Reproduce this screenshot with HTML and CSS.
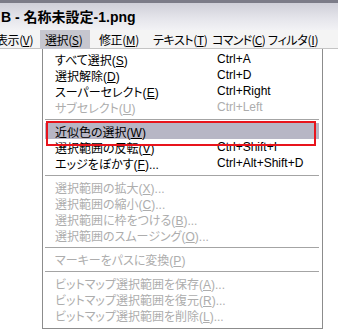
FILE: index.html
```html
<!DOCTYPE html>
<html lang="ja">
<head>
<meta charset="utf-8">
<link rel="stylesheet" href="styles.css">
</head>
<body>
<div class="window">
  <div class="titlebar"><span class="title">B - 名称未設定-1.png</span></div>
  <div class="menubar">
    <span class="mitem m-view">表示(<u>V</u>)</span>
    <span class="mitem m-select active">選択(<u>S</u>)</span>
    <span class="mitem m-modify">修正(<u>M</u>)</span>
    <span class="mitem m-text">テキスト(<u>T</u>)</span>
    <span class="mitem m-command">コマンド(<u>C</u>)</span>
    <span class="mitem m-filter">フィルタ(<u>I</u>)</span>
  </div>
  <div class="canvas"></div>
  <div class="dropdown">
    <div class="row"><span class="label">すべて選択(<u>S</u>)</span><span class="key">Ctrl+A</span></div>
    <div class="row"><span class="label">選択解除(<u>D</u>)</span><span class="key">Ctrl+D</span></div>
    <div class="row"><span class="label">スーパーセレクト(<u>E</u>)</span><span class="key">Ctrl+Right</span></div>
    <div class="row disabled"><span class="label">サブセレクト(<u>U</u>)</span><span class="key">Ctrl+Left</span></div>
    <div class="sep"></div>
    <div class="row hot"><span class="label">近似色の選択(<u>W</u>)</span><span class="key"></span></div>
    <div class="row"><span class="label">選択範囲の反転(<u>V</u>)</span><span class="key">Ctrl+Shift+I</span></div>
    <div class="row"><span class="label">エッジをぼかす(<u>F</u>)...</span><span class="key">Ctrl+Alt+Shift+D</span></div>
    <div class="sep"></div>
    <div class="row disabled"><span class="label">選択範囲の拡大(<u>X</u>)...</span></div>
    <div class="row disabled"><span class="label">選択範囲の縮小(<u>C</u>)...</span></div>
    <div class="row disabled"><span class="label">選択範囲に枠をつける(<u>B</u>)...</span></div>
    <div class="row disabled"><span class="label">選択範囲のスムージング(<u>O</u>)...</span></div>
    <div class="sep"></div>
    <div class="row disabled"><span class="label">マーキーをパスに変換(<u>P</u>)</span></div>
    <div class="sep"></div>
    <div class="row disabled"><span class="label">ビットマップ選択範囲を保存(<u>A</u>)...</span></div>
    <div class="row disabled"><span class="label">ビットマップ選択範囲を復元(<u>R</u>)...</span></div>
    <div class="row disabled"><span class="label">ビットマップ選択範囲を削除(<u>L</u>)...</span></div>
  </div>
  <div class="callout"></div>
</div>
</body>
</html>
```

FILE: styles.css
```css
* { box-sizing: border-box; }
html, body {
  margin: 0;
  padding: 0;
  background: #ffffff;
}
body {
  width: 338px;
  height: 331px;
  overflow: hidden;
  font-family: "Liberation Sans", "Noto Sans CJK JP", sans-serif;
  font-size: 12px;
  color: #000;
  font-feature-settings: "palt";
}
.window {
  position: relative;
  width: 338px;
  height: 331px;
  overflow: hidden;
  background: #ffffff;
}
.titlebar {
  height: 30px;
  border-top: 3px solid #7c7c88;
  background: linear-gradient(#cfcfd8, #e6e6ec 60%, #f2f2f5);
  display: flex;
  align-items: center;
  padding-left: 1px;
  padding-bottom: 1px;
}
.title {
  font-weight: bold;
  font-size: 14px;
}
.menubar {
  height: 19px;
  display: flex;
  align-items: center;
  background: #f4f4f4;
  border-bottom: 1px solid #c4c4c4;
  margin-left: -9px;
  font-family: "Noto Sans CJK JP", sans-serif;
  letter-spacing: -0.4px;
}
.mitem {
  height: 19px;
  display: flex;
  align-items: center;
  padding-left: 5px;
  white-space: nowrap;
  flex: none;
  overflow: hidden;
}
.m-view { width: 49px; }
.m-select { width: 50px; margin-right: 4px; }
.m-modify { width: 54px; }
.m-text { width: 59px; }
.m-command { width: 58px; letter-spacing: -0.7px; }
.m-filter { width: 80px; padding-left: 3px; letter-spacing: -0.3px; }
.mitem.active { background: #c6c6cf; }
u { text-underline-offset: 1px; }
.canvas {
  height: 282px;
  background: #ffffff;
}
.dropdown {
  position: absolute;
  left: 42px;
  top: 49px;
  width: 281px;
  height: 280px;
  background: #ffffff;
  border: 1px solid #8c8c8c;
  border-top: none;
  padding: 2px 3px 5px 2px;
}
.row {
  height: 16px;
  display: flex;
  align-items: center;
  white-space: nowrap;
}
.label {
  width: 172px;
  padding-left: 10px;
  flex: none;
}
.key {
  flex: 1;
}
.row.disabled { color: #adadad; }
.row.hot { background: #b7b6c5; }
.sep {
  height: 8px;
  display: flex;
  align-items: center;
}
.sep::before {
  content: "";
  display: block;
  width: 100%;
  height: 1px;
  background: #a4a4a4;
}
.callout {
  position: absolute;
  left: 46px;
  top: 121px;
  width: 270px;
  height: 25px;
  border: 2px solid #e8141c;
}
```
